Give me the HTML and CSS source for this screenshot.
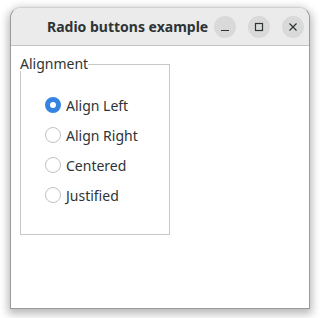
FILE: index.html
```html
<!DOCTYPE html>
<html>
<head>
<meta charset="utf-8">
<link rel="stylesheet" href="styles.css">
</head>
<body>
<div class="window">
  <div class="titlebar">
    <div class="title">Radio buttons example</div>
    <div class="controls">
      <div class="ctl"><svg width="22" height="22" viewBox="0 0 22 22"><path d="M7 14.5h8" stroke="#2e3436" stroke-width="1.2"/></svg></div>
      <div class="ctl"><svg width="22" height="22" viewBox="0 0 22 22"><rect x="7.5" y="7.5" width="7" height="7" fill="none" stroke="#2e3436" stroke-width="1.2"/></svg></div>
      <div class="ctl"><svg width="22" height="22" viewBox="0 0 22 22"><path d="M7.5 7.5l7 7M14.5 7.5l-7 7" stroke="#2e3436" stroke-width="1.2"/></svg></div>
    </div>
  </div>
  <div class="content">
    <fieldset class="group">
      <legend>Alignment</legend>
      <div class="options">
        <label class="opt"><span class="radio checked"></span>Align Left</label>
        <label class="opt"><span class="radio"></span>Align Right</label>
        <label class="opt"><span class="radio"></span>Centered</label>
        <label class="opt"><span class="radio"></span>Justified</label>
      </div>
    </fieldset>
  </div>
</div>
</body>
</html>
```
FILE: styles.css
```css
html, body {
  margin: 0;
  padding: 0;
  background: #ffffff;
  width: 320px;
  height: 318px;
  overflow: hidden;
}
body {
  padding: 7px 10px 0 10px;
  box-sizing: border-box;
  font-family: "Noto Sans", "DejaVu Sans", sans-serif;
  color: #2e3436;
}
.window {
  width: 300px;
  height: 302px;
  box-sizing: border-box;
  border: 1px solid #9a9a9a;
  border-top-color: #d0d0d0;
  border-radius: 11px 11px 0 0;
  background: #ffffff;
  box-shadow: 0 3px 9px 2px rgba(0,0,0,0.28);
  display: flex;
  flex-direction: column;
  overflow: hidden;
}
.titlebar {
  height: 37px;
  flex: none;
  background: #ebebeb;
  border-bottom: 1px solid #c4c4c4;
  display: flex;
  align-items: center;
  position: relative;
}
.title {
  font-weight: bold;
  font-size: 14px;
  margin-left: 36px;
  letter-spacing: 0;
}
.controls {
  display: flex;
  gap: 12px;
  margin-left: 6px;
}
.ctl {
  width: 22px;
  height: 22px;
  border-radius: 50%;
  background: #d9d9d9;
}
.ctl svg { display: block; }
.content {
  padding: 11px 0 0 9px;
}
.group {
  margin: 0;
  width: 150px;
  height: 178px;
  box-sizing: border-box;
  border: 1px solid #c8c8c8;
  padding: 0;
  position: relative;
}
legend {
  padding: 0;
  font-size: 14px;
  margin-left: -1px;
  line-height: 14px;
}
.options {
  display: flex;
  flex-direction: column;
  gap: 10px;
  padding: 24px 0 0 24px;
}
.opt {
  display: flex;
  align-items: center;
  height: 20px;
  font-size: 14px;
  gap: 5px;
}
.radio {
  width: 16px;
  height: 16px;
  box-sizing: border-box;
  border-radius: 50%;
  border: 1px solid #c2c2c2;
  background: #fff;
  flex: none;
}
.radio.checked {
  border: 5px solid #3584e4;
  background: #fff;
}
```
